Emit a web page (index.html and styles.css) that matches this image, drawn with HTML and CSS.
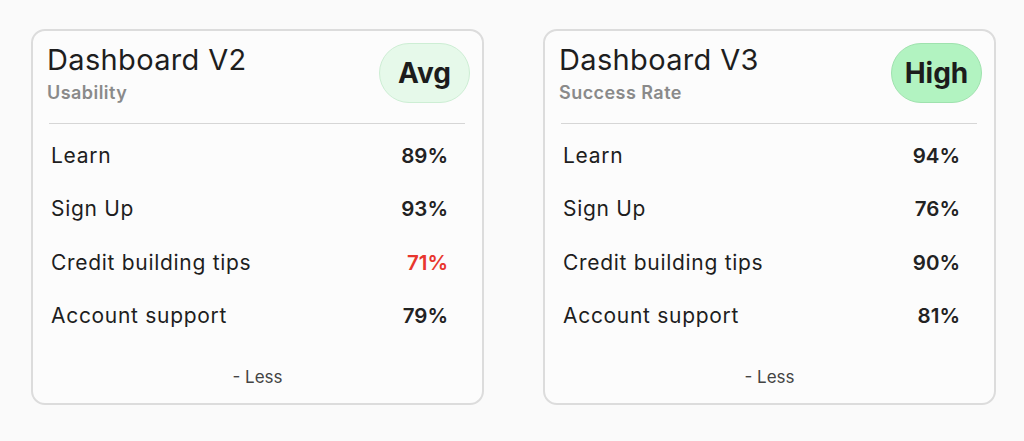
FILE: index.html
```html
<!DOCTYPE html>
<html>
<head>
<meta charset="utf-8">
<link rel="stylesheet" href="styles.css">
</head>
<body>
<main class="board">
  <section class="card">
    <header class="card-head">
      <div class="titles">
        <h2 class="title">Dashboard V2</h2>
        <div class="subtitle">Usability</div>
      </div>
      <span class="badge badge-avg">Avg</span>
    </header>
    <hr class="divider">
    <ul class="rows">
      <li class="row"><span>Learn</span><span class="pct">89%</span></li>
      <li class="row"><span>Sign Up</span><span class="pct">93%</span></li>
      <li class="row"><span>Credit building tips</span><span class="pct pct-low">71%</span></li>
      <li class="row"><span>Account support</span><span class="pct">79%</span></li>
    </ul>
    <div class="toggle">- Less</div>
  </section>
  <section class="card">
    <header class="card-head">
      <div class="titles">
        <h2 class="title">Dashboard V3</h2>
        <div class="subtitle">Success Rate</div>
      </div>
      <span class="badge badge-high">High</span>
    </header>
    <hr class="divider">
    <ul class="rows">
      <li class="row"><span>Learn</span><span class="pct">94%</span></li>
      <li class="row"><span>Sign Up</span><span class="pct">76%</span></li>
      <li class="row"><span>Credit building tips</span><span class="pct">90%</span></li>
      <li class="row"><span>Account support</span><span class="pct">81%</span></li>
    </ul>
    <div class="toggle">- Less</div>
  </section>
</main>
</body>
</html>
```

FILE: styles.css
```css
* { box-sizing: border-box; }
html, body {
  margin: 0;
  background: #fafafa;
  font-family: Inter, "Noto Sans", sans-serif;
  color: #222;
}
.board {
  display: flex;
  gap: 59px;
  padding: 29px 0 0 31px;
}
.card {
  width: 453px;
  height: 376px;
  border: 2px solid #dcdcdc;
  border-radius: 14px;
  background: #fcfcfc;
  display: flex;
  flex-direction: column;
}
.card-head {
  display: flex;
  justify-content: space-between;
  align-items: flex-start;
  padding: 11px 12px 0 14px;
}
.title {
  margin: 0;
  font-size: 29px;
  font-weight: 400;
  letter-spacing: 0.35px;
  line-height: 35px;
  color: #1e1e1e;
}
.subtitle {
  font-size: 18px;
  font-weight: 600;
  letter-spacing: 0.45px;
  color: #8a8a8a;
  line-height: 22px;
  margin-top: 5px;
}
.badge {
  margin-top: 1px;
  width: 91px;
  height: 60px;
  border-radius: 30px;
  display: flex;
  align-items: center;
  justify-content: center;
  font-size: 28px;
  font-weight: 700;
  color: #1c1c1c;
}
.badge-avg {
  background: #e6f9ea;
  border: 1px solid #cdeed4;
}
.badge-high {
  background: #b2f3c1;
  border: 1px solid #9fe2ae;
}
.divider {
  margin: 19px 17px 0 16px;
  border: 0;
  border-top: 1.5px solid #d6d6d6;
  height: 0;
}
.rows {
  list-style: none;
  margin: 5px 34px 0 18px;
  padding: 0;
}
.row {
  display: flex;
  justify-content: space-between;
  align-items: baseline;
  font-size: 21px;
  letter-spacing: 0.7px;
  line-height: 53.3px;
  color: #1e1e1e;
}
.pct {
  font-size: 20.5px;
  letter-spacing: 0;
  font-weight: 600;
  color: #222;
}
.pct-low { color: #e8362e; }
.toggle {
  margin-top: auto;
  margin-bottom: 16px;
  text-align: center;
  font-size: 17px;
  color: #444;
}
```
